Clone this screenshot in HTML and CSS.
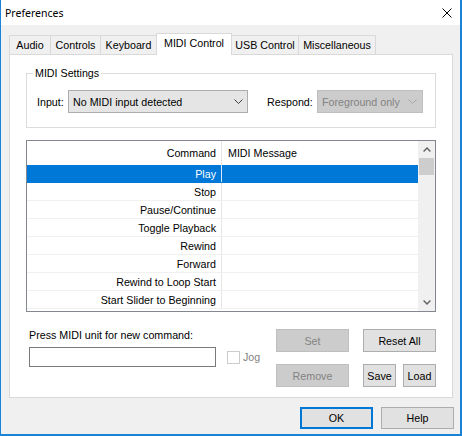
FILE: index.html
```html
<!DOCTYPE html>
<html>
<head>
<meta charset="utf-8">
<title>Preferences</title>
<link rel="stylesheet" href="styles.css">
</head>
<body>
<div class="window">
  <div class="titlebar">
    <span class="title">Preferences</span>
    <svg class="close" width="10" height="10" viewBox="0 0 10 10"><path d="M0.5 0.5 L9.5 9.5 M9.5 0.5 L0.5 9.5" stroke="#000" stroke-width="1" fill="none"/></svg>
  </div>
  <div class="tabs">
    <div class="tab t-audio">Audio</div>
    <div class="tab t-controls">Controls</div>
    <div class="tab t-keyboard">Keyboard</div>
    <div class="tab t-midi active">MIDI Control</div>
    <div class="tab t-usb">USB Control</div>
    <div class="tab t-misc">Miscellaneous</div>
  </div>
  <div class="panel">
    <fieldset class="group">
      <legend>MIDI Settings</legend>
      <div class="settings">
        <span class="lbl lbl-input">Input:</span>
        <div class="combo combo-input">
          <span>No MIDI input detected</span>
          <svg width="9" height="5" viewBox="0 0 9 5"><path d="M0.5 0.5 L4.5 4.5 L8.5 0.5" stroke="#404040" fill="none"/></svg>
        </div>
        <span class="lbl lbl-respond">Respond:</span>
        <div class="combo combo-respond">
          <span>Foreground only</span>
          <svg width="9" height="5" viewBox="0 0 9 5"><path d="M0.5 0.5 L4.5 4.5 L8.5 0.5" stroke="#a8a8a8" fill="none"/></svg>
        </div>
      </div>
    </fieldset>

    <div class="list">
      <div class="list-body">
        <div class="row header"><div class="c1">Command</div><div class="c2">MIDI Message</div></div>
        <div class="row selected"><div class="c1">Play</div><div class="c2"></div></div>
        <div class="row"><div class="c1">Stop</div><div class="c2"></div></div>
        <div class="row"><div class="c1">Pause/Continue</div><div class="c2"></div></div>
        <div class="row"><div class="c1">Toggle Playback</div><div class="c2"></div></div>
        <div class="row"><div class="c1">Rewind</div><div class="c2"></div></div>
        <div class="row"><div class="c1">Forward</div><div class="c2"></div></div>
        <div class="row"><div class="c1">Rewind to Loop Start</div><div class="c2"></div></div>
        <div class="row"><div class="c1">Start Slider to Beginning</div><div class="c2"></div></div>
      </div>
      <div class="scrollbar">
        <div class="sb-btn"><svg width="8" height="5" viewBox="0 0 8 5"><path d="M0.6 4.4 L4 1 L7.4 4.4" stroke="#606060" stroke-width="1.4" fill="none"/></svg></div>
        <div class="sb-thumb"></div>
        <div class="sb-track"></div>
        <div class="sb-btn"><svg width="8" height="5" viewBox="0 0 8 5"><path d="M0.6 0.6 L4 4 L7.4 0.6" stroke="#606060" stroke-width="1.4" fill="none"/></svg></div>
      </div>
    </div>

    <div class="bottom">
      <div class="newcmd">
        <div class="newcmd-label">Press MIDI unit for new command:</div>
        <div class="input-row">
          <div class="textbox"></div>
          <div class="jog"><span class="checkbox"></span><span>Jog</span></div>
        </div>
      </div>
      <div class="actions">
        <div class="col">
          <button class="btn disabled">Set</button>
          <button class="btn disabled">Remove</button>
        </div>
        <div class="col">
          <button class="btn">Reset All</button>
          <div class="pair">
            <button class="btn small">Save</button>
            <button class="btn small">Load</button>
          </div>
        </div>
      </div>
    </div>
  </div>
  <div class="dialog-buttons">
    <button class="btn dlg default">OK</button>
    <button class="btn dlg">Help</button>
  </div>
</div>
</body>
</html>
```

FILE: styles.css
```css
html, body {
  margin: 0;
  padding: 0;
  background: #ffffff;
}

body {
  font-family: "Liberation Sans", Arial, sans-serif;
  font-size: 10.7px;
  color: #000;
}

.window {
  width: 462px;
  height: 436px;
  box-sizing: border-box;
  border-left: 1px solid #1883d7;
  border-right: 2px solid #1883d7;
  border-bottom: 2px solid #1883d7;
  background: #f0f0f0;
  display: flex;
  flex-direction: column;
}

/* title bar */
.titlebar {
  height: 25px;
  flex: none;
  background: #ffffff;
  display: flex;
  align-items: center;
  justify-content: space-between;
  padding: 0 8px 0 4px;
}

.title {
  font-family: "Noto Sans", "Liberation Sans", sans-serif;
  font-size: 10.5px;
}

.close {
  display: block;
}

/* tabs */
.tabs {
  flex: none;
  display: flex;
  align-items: flex-end;
  height: 21px;
  margin-top: 8px;
  padding-left: 8px;
}

.tab {
  box-sizing: border-box;
  height: 19px;
  border: 1px solid #d9d9d9;
  border-bottom: none;
  margin-left: -1px;
  background: #f0f0f0;
  display: flex;
  align-items: center;
  justify-content: center;
  white-space: nowrap;
}

.tab:first-child { margin-left: 0; }

.tab.active {
  height: 22px;
  margin-bottom: -1px;
  background: #ffffff;
  position: relative;
  z-index: 1;
  padding-bottom: 3px;
}

.t-audio { width: 42px; }
.t-controls { width: 51px; }
.t-keyboard { width: 57px; }
.t-midi { width: 76px; }
.t-usb { width: 68px; }
.t-misc { width: 78px; }

/* panel */
.panel {
  flex: none;
  box-sizing: border-box;
  width: 444px;
  height: 344px;
  margin-left: 8px;
  border: 1px solid #d9d9d9;
  background: #ffffff;
  display: flex;
  flex-direction: column;
}

.group {
  margin: 11px 16px 0;
  padding: 10px 0 14px 0;
  border: 1px solid #dcdcdc;
  min-width: 0;
}

.group legend {
  margin-left: 6px;
  padding: 0 2px;
  line-height: 14px;
}

.settings {
  display: flex;
  align-items: center;
  padding-left: 10px;
}

.lbl-input { width: 31px; }

.lbl-respond {
  width: 50px;
  margin-left: 19px;
}

.combo {
  box-sizing: border-box;
  height: 23px;
  border: 1px solid #adadad;
  background: #e5e5e5;
  display: flex;
  align-items: center;
  justify-content: space-between;
  padding: 0 4px 0 4px;
  white-space: nowrap;
}

.combo svg { display: block; }

.combo-input { width: 180px; }

.combo-respond {
  width: 106px;
  background: #cccccc;
  border-color: #bfbfbf;
  color: #838383;
  padding-right: 5px;
}

/* list */
.list {
  flex: none;
  box-sizing: border-box;
  height: 172px;
  margin: 12px 16px 0;
  border: 1px solid #828790;
  display: flex;
}

.list-body {
  flex: 1;
  min-width: 0;
}

.row {
  display: flex;
  height: 18px;
  box-sizing: border-box;
  border-bottom: 1px solid #f0f0f0;
}

.row.header {
  height: 24px;
  border-bottom: none;
}

.c1 {
  width: 195px;
  flex: none;
  box-sizing: border-box;
  padding-right: 5px;
  border-right: 1px solid #e5e5e5;
  display: flex;
  align-items: center;
  justify-content: flex-end;
  white-space: nowrap;
}

.c2 {
  flex: 1;
  padding-left: 6px;
  display: flex;
  align-items: center;
  white-space: nowrap;
}

.row.selected {
  background: #0078d7;
  color: #ffffff;
  border-bottom-color: #0078d7;
}

.row.selected .c1 {
  border-right-color: #d8e8f6;
}

.scrollbar {
  width: 17px;
  flex: none;
  background: #f0f0f0;
  display: flex;
  flex-direction: column;
}

.sb-btn {
  height: 17px;
  flex: none;
  display: flex;
  align-items: center;
  justify-content: center;
}

.sb-btn svg { display: block; }

.sb-thumb {
  height: 17px;
  flex: none;
  margin: 0 1px;
  background: #cdcdcd;
}

.sb-track { flex: 1; }

/* bottom area */
.bottom {
  display: flex;
  align-items: flex-start;
  margin: 17px 16px 0 19px;
}

.newcmd {
  display: flex;
  flex-direction: column;
}

.newcmd-label {
  line-height: 13px;
  margin-bottom: 5px;
}

.input-row {
  display: flex;
  align-items: center;
}

.textbox {
  box-sizing: border-box;
  width: 187px;
  height: 20px;
  border: 1px solid #7a7a7a;
  background: #ffffff;
}

.jog {
  display: flex;
  align-items: center;
  margin-left: 11px;
  color: #838383;
}

.checkbox {
  box-sizing: border-box;
  width: 13px;
  height: 13px;
  border: 1px solid #cccccc;
  background: #ffffff;
  margin-right: 3px;
}

.actions {
  margin-left: auto;
  display: flex;
  gap: 14px;
}

.col {
  display: flex;
  flex-direction: column;
  gap: 12px;
}

.pair {
  display: flex;
  gap: 7px;
}

.btn {
  box-sizing: border-box;
  width: 73px;
  height: 23px;
  margin: 0;
  padding: 0;
  border: 1px solid #adadad;
  border-radius: 0;
  background: #e1e1e1;
  font: inherit;
  color: #000;
  display: flex;
  align-items: center;
  justify-content: center;
}

.btn.small { width: 33px; }

.btn.disabled {
  background: #cccccc;
  border-color: #bfbfbf;
  color: #838383;
}

.dialog-buttons {
  display: flex;
  justify-content: flex-end;
  gap: 8px;
  margin-top: 9px;
  padding-right: 6px;
}

.btn.dlg { height: 22px; }

.btn.default {
  border: 2px solid #0078d7;
}
```
